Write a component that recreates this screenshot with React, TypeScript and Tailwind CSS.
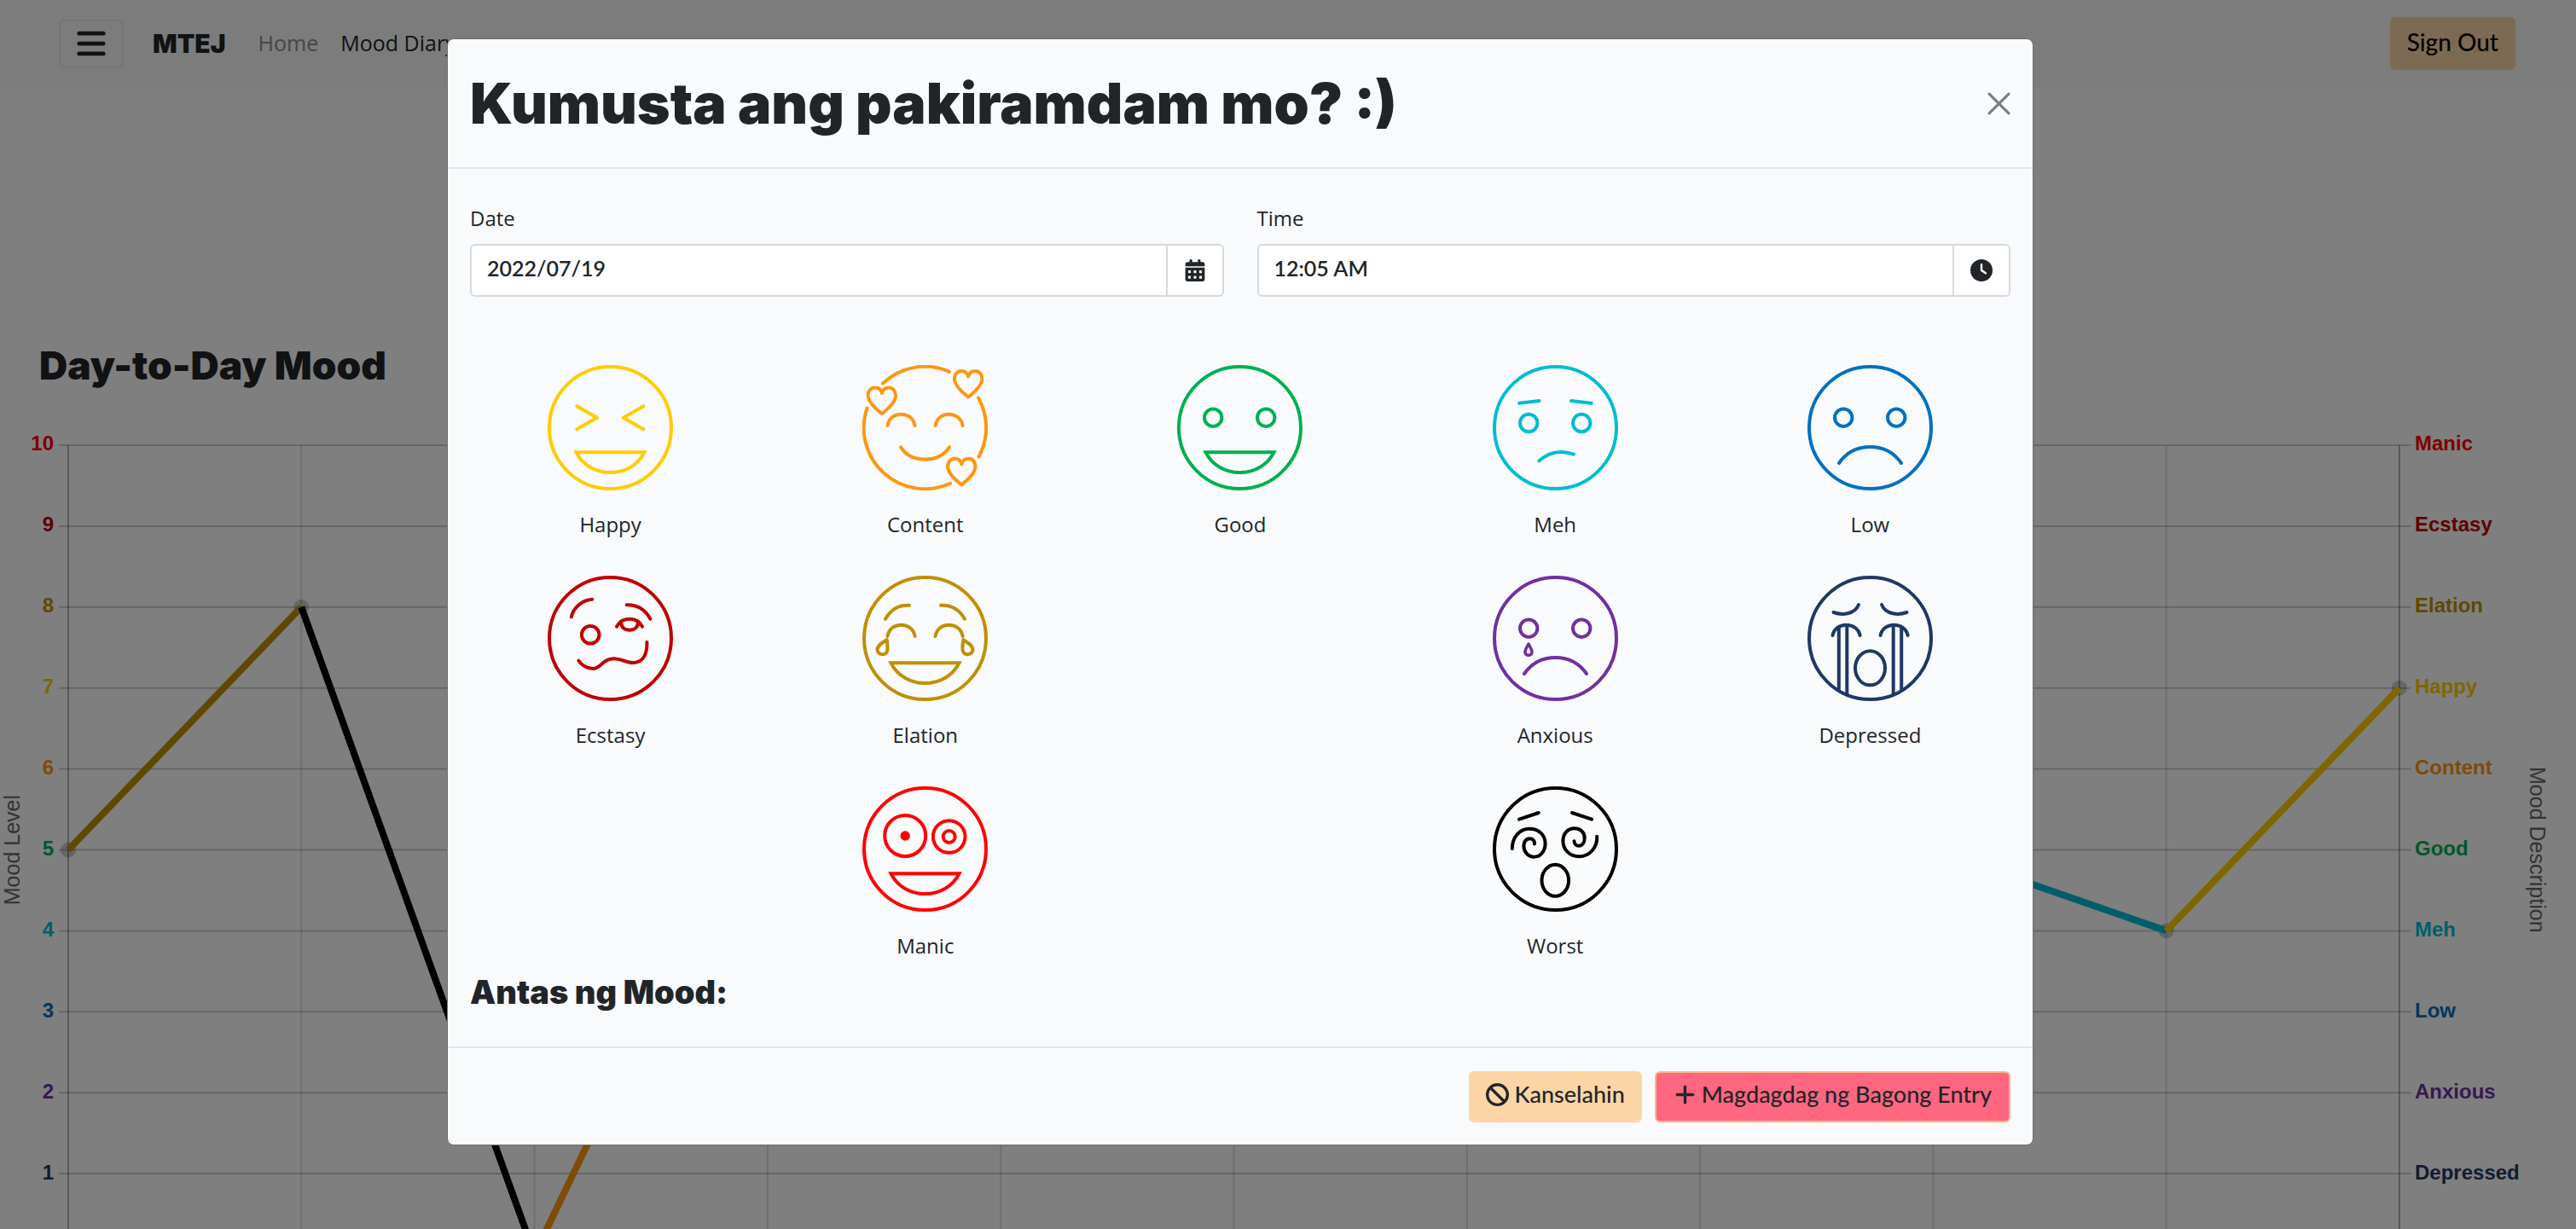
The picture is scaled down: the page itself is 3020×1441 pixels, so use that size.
import React from "react";
import { FaBars, FaBan, FaCalendarDays, FaClock, FaPlus } from "react-icons/fa6";

type Mood = { name: string; color: string; face: React.ReactNode };

const ring = <circle cx="73.5" cy="73.5" r="71.5" />;
const grin = <path d="M33.5 102.3H113.5C106 117 91 126 73.5 126S41 117 33.5 102.3Z" strokeLinejoin="miter" />;
const frown = <path d="M37 115C46 102 58 96 73.5 96S101 102 110 115" />;
const smilingEyes = (
  <path d="M29.5 71C31 62 38 57.7 45.5 57.7S60 62 61.6 71M85.6 71C87 62 94 57.7 101.5 57.7S116 62 117.6 71" />
);
const roundEyes = (cy: number) => (
  <>
    <circle cx="42.2" cy={cy} r="10.2" />
    <circle cx="104.2" cy={cy} r="10.2" />
  </>
);
const heart = "M22.9 57C14 50 7 42 6.7 36C6.500 30 10.500 26.500 15 26.500C19 26.500 22 29 22.900 33C24 29 27 26.500 31 26.500C35.500 26.500 39.300 30 39 36C38.800 42 32 50 22.900 57Z";

const moods: Record<string, Mood> = {
  happy: {
    name: "Happy",
    color: "#ffcc00",
    face: (
      <>
        {ring}
        <path d="M34.300 48.300L58 61.700L34.300 75.300M112.500 48.300L88.800 61.700L112.500 75.300" />
        {grin}
      </>
    ),
  },
  content: {
    name: "Content",
    color: "#ff9610",
    face: (
      <>
        <path d="M24 21.500A71.500 71.500 0 0 1 102 7.800M136 38.500A71.500 71.500 0 0 1 136.500 107.500M103 138.700A71.500 71.500 0 0 1 5.500 50.700" />
        <path d={heart} />
        <path d={heart} transform="translate(101.200 -19.500)" />
        <path d={heart} transform="translate(93.400 83.300)" />
        {smilingEyes}
        <path d="M45 96.300C51 105.500 61 110.500 73.500 110.500S96 105.500 102 96.300" />
      </>
    ),
  },
  good: {
    name: "Good",
    color: "#00b050",
    face: (
      <>
        {ring}
        {roundEyes(61.7)}
        {grin}
      </>
    ),
  },
  meh: {
    name: "Meh",
    color: "#00bcd4",
    face: (
      <>
        {ring}
        <path d="M31 44.700L54.500 42M92 42L115.700 44.700M54.500 112.300C66 102 80 99.500 95 104.700" />
        {roundEyes(68)}
      </>
    ),
  },
  low: {
    name: "Low",
    color: "#0070c0",
    face: (
      <>
        {ring}
        {roundEyes(61.7)}
        {frown}
      </>
    ),
  },
  ecstasy: {
    name: "Ecstasy",
    color: "#c00000",
    face: (
      <>
        {ring}
        <path d="M27.800 48.300C30 38 40 28.500 52.300 27.700M92.700 34.300C104 34 114 39 120.400 50.700" />
        <circle cx="50.200" cy="69.300" r="10.300" />
        <path d="M81 59.700C84 53.500 89.500 50.700 96 50.700S108 53.500 111 59.700M86 54C86 60.500 90 63.700 96 63.700S106 60.500 106.200 54" />
        <path d="M36.400 99.700C39 104 46 109 53 109C63 109 64 97.500 77 97.300C86 97 92 102 100 102C112 102 117 92 116.400 78" />
      </>
    ),
  },
  elation: {
    name: "Elation",
    color: "#bf9000",
    face: (
      <>
        {ring}
        <path d="M27 50.700C33 40 43 34 55 34.700M92 34.700C104 34 114 40 120 50.700" />
        {smilingEyes}
        <path d="M28.600 75C29.500 80 30 84 29.300 88C27.500 94 18.500 93.500 17.500 87C17.500 81 24 79 28.600 75ZM118.400 75C117.500 80 117 84 117.700 88C119.500 94 128.500 93.500 129.500 87C129.500 81 123 79 118.400 75Z" />
        {grin}
      </>
    ),
  },
  anxious: {
    name: "Anxious",
    color: "#7030a0",
    face: (
      <>
        {ring}
        {roundEyes(61.7)}
        <path d="M42 80C40 84 38 86 38 89.500C38 94.500 46 94.500 46 89.500C46 86 44 84 42 80Z" strokeWidth="3.500" />
        {frown}
      </>
    ),
  },
  depressed: {
    name: "Depressed",
    color: "#1f3864",
    face: (
      <>
        {ring}
        <path d="M30.500 43C40 46.500 55 46 60 34M87 34C92 46 107 46.500 116.500 43" />
        <path d="M29.500 70C31 62 38 57.700 45.500 57.700S60 62 61.600 70M85.600 70C87 62 94 57.700 101.500 57.700S116 62 117.600 70" />
        <path d="M36.800 61V134M46.300 58V139M100.700 58V139M110.200 61V134" />
        <ellipse cx="73.500" cy="108.300" rx="17.500" ry="20" />
      </>
    ),
  },
  manic: {
    name: "Manic",
    color: "#ff0000",
    face: (
      <>
        {ring}
        <circle cx="50.200" cy="58" r="24" />
        <circle cx="50.200" cy="58" r="5.700" fill="currentColor" stroke="none" />
        <circle cx="101.700" cy="59" r="18.800" />
        <circle cx="101.700" cy="59" r="7" />
        {grin}
      </>
    ),
  },
  worst: {
    name: "Worst",
    color: "#000000",
    face: (
      <>
        {ring}
        <path d="M31 38.700L53.800 31M93 31L116.200 38.700" />
        <path d="M22.800 73C23 59 32 49.700 43 49.700C54 49.700 61.600 57 61.600 67C61.600 76 56 82.700 48.500 82.700C41 82.700 36.400 76 36.400 70C36.400 65 39 61.300 43.500 61.300C47 61.300 49.500 64 49 67.500" />
        <path d="M122.200 58.700C123 72 113 82.300 101.500 82.300C90 82.300 82.400 74 82.400 64.300C82.400 55 88 49.300 96 49.300C103 49.300 107.700 54 107.700 60.500C107.700 66 105 69.700 101 69.700C98 69.700 95.500 67.500 95.500 64.300" />
        <ellipse cx="73.300" cy="110.300" rx="15.800" ry="18.500" />
      </>
    ),
  },
};

const rows: (string | null)[][] = [
  ["happy", "content", "good", "meh", "low"],
  ["ecstasy", "elation", null, "anxious", "depressed"],
  [null, "manic", null, "worst", null],
];

const scale = ["manic", "ecstasy", "elation", "happy", "content", "good", "meh", "low", "anxious", "depressed"];
const levels = [5, 8, 0, 6, 7, 5, 6, 4, 5, 4, 7];

function colorOf(level: number) {
  return level === 0 ? moods.worst.color : moods[scale[10 - level]].color;
}

function MoodChart() {
  return (
    <section className="flex px-1">
      <div className="flex h-[949px] w-5 items-center justify-center">
        <span className="rotate-180 text-[25px] leading-5 whitespace-nowrap text-[#666] [writing-mode:vertical-rl]">
          Mood Level
        </span>
      </div>
      <ul className="-mt-[17px] w-[39px] text-right text-[24px] font-bold">
        {scale.map((key, i) => (
          <li key={key} className="mb-[65px] leading-[30px]" style={{ color: moods[key].color }}>
            {10 - i}
          </li>
        ))}
      </ul>
      <svg
        className="ml-[17px] h-[949px] min-w-0 flex-1 overflow-visible"
        viewBox="0 0 1000 1000"
        preserveAspectRatio="none"
        fill="none"
      >
        {Array.from({ length: 11 }, (_, i) => (
          <g key={i} stroke="#000" strokeWidth="2">
            <path
              d={`M-4 ${i * 100}H1005`}
              strokeOpacity="0.2"
              vectorEffect="non-scaling-stroke"
            />
            <path
              d={`M${i * 100} 0V1000`}
              strokeOpacity={i % 10 === 0 ? 0.3 : 0.13}
              vectorEffect="non-scaling-stroke"
            />
          </g>
        ))}
        {levels.map((level, i) => (
          <path
            key={i}
            d={`M${i * 100} ${1000 - level * 100}h0`}
            stroke="#000"
            strokeOpacity="0.2"
            strokeWidth="18"
            strokeLinecap="round"
            vectorEffect="non-scaling-stroke"
          />
        ))}
        {levels.slice(1).map((level, i) => (
          <path
            key={i}
            d={`M${i * 100} ${1000 - levels[i] * 100}L${i * 100 + 100} ${1000 - level * 100}`}
            stroke={i === 0 ? moods.elation.color : colorOf(level)}
            strokeWidth="8"
            vectorEffect="non-scaling-stroke"
          />
        ))}
      </svg>
      <ul className="-mt-[17px] ml-[18px] w-[128px] text-[24px] font-bold">
        {scale.map((key) => (
          <li key={key} className="mb-[65px] leading-[30px]" style={{ color: moods[key].color }}>
            {moods[key].name}
          </li>
        ))}
      </ul>
      <div className="mr-[29px] flex h-[949px] w-7 items-center justify-end">
        <span className="text-[25px] leading-6 whitespace-nowrap text-[#666] [writing-mode:vertical-rl]">
          Mood Description
        </span>
      </div>
    </section>
  );
}

function Field({ id, label, value, icon }: { id: string; label: string; value: string; icon: React.ReactNode }) {
  return (
    <div className="flex flex-1 flex-col gap-3">
      <label htmlFor={id} className="text-[24px] leading-9">
        {label}
      </label>
      <div className="flex h-[62px]">
        <input
          id={id}
          defaultValue={value}
          className="min-w-0 flex-1 rounded-l-md border-2 border-[#d5dade] bg-white px-[18px] pb-1 font-[Lato] text-[25px] font-semibold text-[#212529]"
        />
        <button
          type="button"
          aria-label={`Choose ${label.toLowerCase()}`}
          className="-ml-[2px] flex w-[68px] items-center justify-center rounded-r-md border-2 border-[#d5dade] bg-white text-[26px]"
        >
          {icon}
        </button>
      </div>
    </div>
  );
}

function EntryDialog() {
  return (
    <div
      role="dialog"
      aria-labelledby="entry-title"
      className="h-fit w-full max-w-[1860px] rounded-lg border border-[#6b6b6b] bg-[#f8fafc] text-[#212529]"
    >
      <header className="flex h-[152px] items-center justify-between border-b-2 border-[#e3e6e9] px-[26px]">
        <h1 id="entry-title" className="font-[Inter] text-[66px] leading-[76px] font-black">
          Kumusta ang pakiramdam mo? :)
        </h1>
        <button type="button" aria-label="Close" className="text-[#7c7d7e]">
          <svg className="size-[27px]" viewBox="0 0 26 26" stroke="currentColor" strokeWidth="3" strokeLinecap="round">
            <path d="M2 2L24 24M24 2L2 24" />
          </svg>
        </button>
      </header>

      <div className="px-[26px] pt-10 pb-11">
        <div className="flex gap-[39px]">
          <Field id="date" label="Date" value="2022/07/19" icon={<FaCalendarDays />} />
          <Field id="time" label="Time" value="12:05 AM" icon={<FaClock />} />
        </div>
        <div className="-mx-5 mt-20 grid grid-cols-5 gap-y-10">
          {rows.flat().map((key, i) =>
            key ? (
              <button key={i} type="button" className="flex flex-col items-center gap-5">
                <svg
                  className="size-[147px]"
                  viewBox="0 0 147 147"
                  fill="none"
                  stroke="currentColor"
                  strokeWidth="4"
                  strokeLinecap="round"
                  strokeLinejoin="round"
                  style={{ color: moods[key].color }}
                >
                  {moods[key].face}
                </svg>
                <span className="text-[24px] leading-10">{moods[key].name}</span>
              </button>
            ) : (
              <div key={i} />
            ),
          )}
        </div>
        <h2 className="mt-[14px] font-[Inter] text-[38px] leading-10 font-black">Antas ng Mood:</h2>
      </div>

      <footer className="flex h-[115px] items-center justify-end gap-[15px] border-t-2 border-[#e3e6e9] px-[26px] font-[Lato] text-[27px] font-medium">
        <button type="button" className="flex h-[60px] items-center gap-[6px] rounded-md bg-[#fbd5a5] px-5 pb-1">
          <FaBan />
          Kanselahin
        </button>
        <button
          type="button"
          className="flex h-[60px] items-center gap-[6px] rounded-md border-2 border-[#fbb68e] bg-[#ff6680] px-5 pb-1"
        >
          <FaPlus />
          Magdagdag ng Bagong Entry
        </button>
      </footer>
    </div>
  );
}

export default function App() {
  return (
    <div className="h-screen overflow-hidden bg-white font-['Open_Sans',sans-serif] text-[#212529]">
      <nav className="flex h-[102px] items-center bg-[#f8f9fa] pr-[71px] pl-[69px]">
        <button
          type="button"
          aria-label="Toggle menu"
          className="flex h-[57px] w-[76px] items-center justify-center rounded-md border-2 border-[#e8e8e9] text-[38px]"
        >
          <FaBars />
        </button>
        <a href="#" className="ml-[34px] font-[Inter] text-[30px] font-black">
          MTEJ
        </a>
        <a href="#" className="ml-[38px] text-[25px] text-[#8c8c8c]">
          Home
        </a>
        <a href="#" className="ml-[26px] text-[25px]">
          Mood Diary
        </a>
        <button
          type="button"
          className="ml-auto h-[62px] rounded-md bg-[#fbd5a5] px-5 pb-1 font-[Lato] text-[28px] font-medium text-black"
        >
          Sign Out
        </button>
      </nav>
      <main className="pt-[302px] font-['Liberation_Sans',sans-serif]">
        <h2 className="mb-[70px] pl-[46px] font-[Inter] text-[46px] leading-[48px] font-black">Day-to-Day Mood</h2>
        <MoodChart />
      </main>
      <div className="fixed inset-0 flex justify-center bg-black/50 pt-[45px] pr-[112px]">
        <EntryDialog />
      </div>
    </div>
  );
}
